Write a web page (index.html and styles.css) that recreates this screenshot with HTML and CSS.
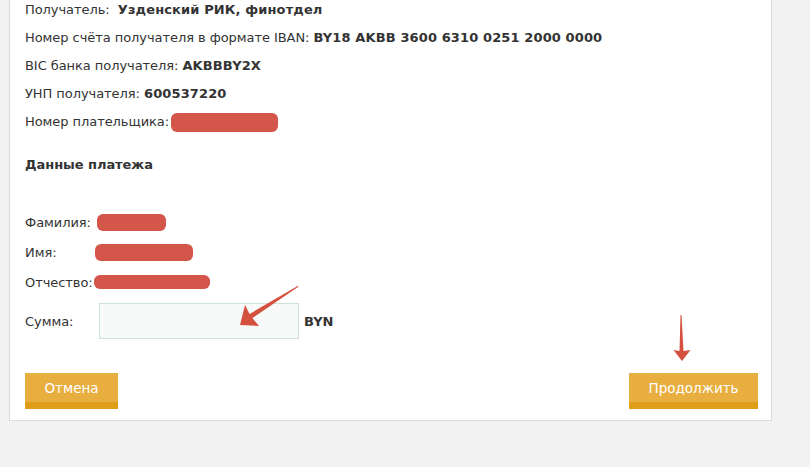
FILE: index.html
```html
<!DOCTYPE html>
<html lang="ru">
<head>
<meta charset="utf-8">
<title>Оплата</title>
<link rel="stylesheet" href="styles.css">
</head>
<body>
<div class="panel">
  <div class="info">
    <div class="row">Получатель:&nbsp; <b>Узденский РИК, финотдел</b></div>
    <div class="row">Номер счёта получателя в формате IBAN: <b>BY18 AKBB 3600 6310 0251 2000 0000</b></div>
    <div class="row">BIC банка получателя: <b>AKBBBY2X</b></div>
    <div class="row">УНП получателя: <b>600537220</b></div>
    <div class="row">Номер плательщика: <span class="blob blob-payer"></span></div>
  </div>
  <h3 class="heading">Данные платежа</h3>
  <div class="form">
    <div class="frow"><span class="label">Фамилия:</span><span class="blob blob-f"></span></div>
    <div class="frow"><span class="label">Имя:</span><span class="blob blob-i"></span></div>
    <div class="frow"><span class="label">Отчество:</span><span class="blob blob-o"></span></div>
    <div class="frow sum"><span class="label">Сумма:</span><input class="amount" type="text"><b class="cur">BYN</b></div>
  </div>
  <div class="actions">
    <button class="btn btn-cancel">Отмена</button>
    <button class="btn btn-next">Продолжить</button>
  </div>
  <svg class="arrows" width="790" height="430" viewBox="0 0 790 430">
    <polygon fill="#d4503f" points="288.5,289.5 239.6,317.9 235,309 230,329 249,330 242.4,322.1 288,291"/>
    <polygon fill="#d4503f" points="670.5,319 671.5,319 673.5,355 680.5,354 672,365 663.5,354 669.5,355"/>
  </svg>
</div>
</body>
</html>
```
FILE: styles.css
```css
html, body {
  margin: 0;
  padding: 0;
  background: #f2f2f2;
}
body {
  font-family: "DejaVu Sans", Verdana, sans-serif;
  font-size: 13px;
  letter-spacing: -0.06px;
  color: #333;
  height: 467px;
  overflow: hidden;
}
.panel {
  position: relative;
  margin: -4px 0 0 9px;
  width: 763px;
  background: #fff;
  border: 1px solid #dcdcdc;
  border-top: none;
  padding: 0 0 11px 15px;
  box-sizing: border-box;
}
.info {
  display: flex;
  flex-direction: column;
}
.row {
  height: 28px;
  line-height: 28px;
  white-space: nowrap;
}
.row b, .heading, .cur {
  font-weight: bold;
  color: #333;
}
.row b {
  letter-spacing: 0.12px;
}
.blob {
  display: inline-block;
  vertical-align: middle;
  background: #d4554a;
  border-radius: 6px;
}
.blob-payer {
  width: 107px;
  height: 19px;
  margin-left: -2px;
}
.heading {
  margin: 15px 0 0;
  height: 28px;
  line-height: 28px;
  font-size: 13px;
}
.form {
  margin-top: 28px;
  display: flex;
  flex-direction: column;
}
.frow {
  display: flex;
  align-items: center;
  height: 30px;
}
.label {
  width: 74px;
  flex: none;
}
.blob-f { width: 69px; height: 17px; margin-left: -2px; }
.blob-i { width: 98px; height: 17px; margin-left: -4px; }
.blob-o { width: 116px; height: 14px; margin-left: -5px; }
.frow.sum {
  margin-top: 6px;
  height: 36px;
}
.amount {
  width: 200px;
  height: 36px;
  box-sizing: border-box;
  border: 1px solid #cfe2da;
  background: #f7faf9;
  margin: 0;
  padding: 0 6px;
  outline: none;
}
.cur {
  margin-left: 5px;
}
.actions {
  margin-top: 34px;
  display: flex;
  justify-content: space-between;
  padding-right: 13px;
}
.btn {
  height: 36px;
  border: none;
  margin: 0;
  padding: 0 0 7px;
  background: #e8ae3f;
  box-shadow: inset 0 -7px 0 #e09d19;
  color: #fff;
  font-family: "DejaVu Sans", Verdana, sans-serif;
  font-size: 13.5px;
  cursor: pointer;
}
.btn-cancel { width: 93px; }
.btn-next { width: 129px; }
.arrows {
  position: absolute;
  left: 0;
  top: 0;
  pointer-events: none;
}
```
